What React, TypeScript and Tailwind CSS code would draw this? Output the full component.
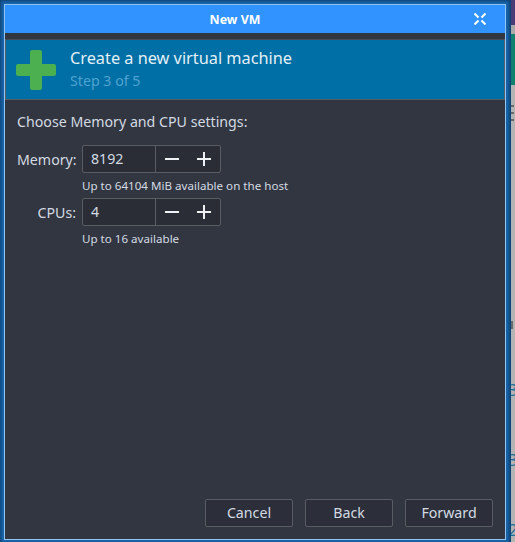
const FONT = "font-['Noto_Sans','Open_Sans',sans-serif]";

function SpinRow({ label, value, hint }: { label: string; value: string; hint: string }) {
  return (
    <>
      <div className="flex h-[28px] items-center">
        <span className="mt-[2px] w-[65px] pr-[6px] text-right text-[14.2px] text-[#d3dae3]">{label}</span>
        <div className="flex h-[28px] w-[139px] rounded-[2px] border border-[#585c63] bg-[#2a2d36]">
          <span className="flex w-[72px] items-center pb-[1px] pl-[8px] text-[14.2px] text-[#d3dae3]">{value}</span>
          <div className="flex flex-1 items-center border-l border-[#585c63] pb-[1px] pl-[9px]">
            <svg width="14" height="14" viewBox="0 0 14 14" fill="#eef0f4">
              <rect x="0" y="6" width="14" height="2" />
            </svg>
            <svg className="ml-[18px]" width="14" height="14" viewBox="0 0 14 14" fill="#eef0f4">
              <rect x="0" y="6" width="14" height="2" />
              <rect x="6" y="0" width="2" height="14" />
            </svg>
          </div>
        </div>
      </div>
      <div className="mb-[4px] ml-[65px] mt-[5px] h-[16px] text-[11.6px] leading-[16px] text-[#d3dae3]">{hint}</div>
    </>
  );
}

function BackdropStrip() {
  return (
    <div className="relative flex w-[4px] flex-col overflow-hidden bg-[#b4b4b4]">
      <div className="h-[25px] bg-[#4a3a78]" />
      <div className="h-[9px] bg-[#a9a9a9]" />
      <div className="h-[51px] bg-[#0f7f70]" />
      <div className="mt-[20px] h-[2px] w-[3px] bg-[#6a6a6a]" />
      <div className="mt-[5px] h-[2px] w-[3px] bg-[#6a6a6a]" />
      <div className="mt-[5px] h-[2px] w-[3px] bg-[#6a6a6a]" />
      <div className="mt-[200px] h-[8px] w-[2px] bg-[#6a6a6a]" />
      <span className="absolute left-[-3px] top-[380px] text-[17px] leading-[20px] text-[#1b6f9e]">3</span>
      <span className="absolute left-[-3px] top-[450px] text-[17px] leading-[20px] text-[#1b6f9e]">3</span>
      <span className="absolute left-[-3px] top-[520px] text-[17px] leading-[20px] text-[#1b6f9e]">2</span>
    </div>
  );
}

export default function App() {
  return (
    <div className={`${FONT} flex h-[542px] w-[515px] overflow-hidden`}>
      <div className="h-full w-[511px] bg-[#0d3f6e] pb-[2px] pl-[4px] pt-[4px]">
        <div className="flex h-full w-[502px] flex-col border border-[#8fc4f5] bg-[#323640] shadow-[0_0_3px_3px_#1b66ad]">
          <div className="relative flex h-[28px] items-center justify-center bg-[#3193ff] pr-[40px] pt-[2px]">
            <span className="text-[12.4px] font-bold text-white">New VM</span>
            <svg className="absolute right-[19px] top-[8px]" width="12" height="12" viewBox="0 0 12 12" stroke="white" strokeWidth="2" fill="none">
              <path d="M0.5 0.5l4 4M11.5 0.5l-4 4M0.5 11.5l4-4M11.5 11.5l-4-4" />
            </svg>
          </div>
          <div className="mt-[6px] flex h-[61px] items-center border border-[#5a5e66] border-t-[#474b53] bg-[#006fa5] pl-[10px]">
            <svg width="40" height="40" viewBox="0 0 40 40" fill="#4caf50">
              <rect x="14" y="0" width="12" height="40" rx="2" />
              <rect x="0" y="14" width="40" height="12" rx="2" />
            </svg>
            <div className="ml-[14px] pb-[2px]">
              <div className="text-[16.3px] leading-[22px] text-[#e4f0f7]">Create a new virtual machine</div>
              <div className="mt-[2px] text-[14.2px] leading-[19px] text-[#4fa2d2]">Step 3 of 5</div>
            </div>
          </div>
          <div className="flex flex-1 flex-col px-[12px] pb-[12px] pt-[12px]">
            <div className="mb-[14px] text-[14.2px] leading-[19px] text-[#d3dae3]">Choose Memory and CPU settings:</div>
            <SpinRow label="Memory:" value="8192" hint="Up to 64104 MiB available on the host" />
            <SpinRow label="CPUs:" value="4" hint="Up to 16 available" />
            <div className="mt-auto flex justify-end gap-[12px]">
              {['Cancel', 'Back', 'Forward'].map((b) => (
                <button key={b} className="h-[28px] w-[88px] rounded-[2px] border border-[#585c63] bg-[#2c2f39] text-[14.2px] text-[#d3dae3]">
                  {b}
                </button>
              ))}
            </div>
          </div>
        </div>
      </div>
      <BackdropStrip />
    </div>
  );
}
